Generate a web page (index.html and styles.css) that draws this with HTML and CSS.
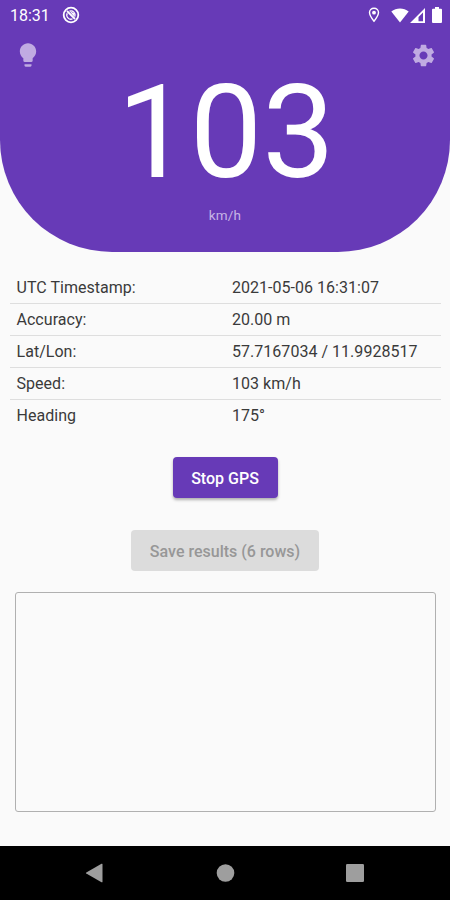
FILE: index.html
```html
<!DOCTYPE html>
<html lang="en">
<head>
    <meta charset="UTF-8">
    <meta name="viewport" content="width=device-width, initial-scale=1.0">
    <title>GPS Speed</title>
    <link rel="stylesheet" href="styles.css">
</head>
<body>
    <header class="speed-panel">
        <div class="status-bar">
            <span class="clock">18:31</span>
            <svg class="status-sync" viewBox="0 0 18 18" width="18" height="18">
                <circle cx="9" cy="9" r="7.3" fill="none" stroke="#fff" stroke-width="1.8"/>
                <path d="M5.200 7.200A4.200 4.200 0 0 0 10.500 12.900M7.500 5.200A4.200 4.200 0 0 1 12.900 10.500" fill="none" stroke="#fff" stroke-width="1.300"/>
                <path d="M5 5L13 13" fill="none" stroke="#fff" stroke-width="1.800"/>
                <path d="M7.500 5L12.500 7.500V11Z" fill="#fff"/>
            </svg>
            <div class="status-icons">
                <svg class="status-location" viewBox="0 0 12 16" width="12" height="16">
                    <path d="M6 1.200C3.400 1.200 1.500 3.100 1.500 5.600C1.500 8.800 6 14.200 6 14.200S10.500 8.800 10.500 5.600C10.500 3.100 8.600 1.200 6 1.200Z" fill="none" stroke="#fff" stroke-width="1.400"/>
                    <circle cx="6" cy="5.700" r="1.900" fill="#fff"/>
                </svg>
                <svg class="status-wifi" viewBox="0 0 18 15" width="18" height="15">
                    <path d="M.3 3.500C5.300-.4 12.700-.4 17.700 3.500L9 14.500Z" fill="#fff"/>
                </svg>
                <svg class="status-signal" viewBox="0 0 15 15" width="15" height="15">
                    <path d="M0 15L15 0V15ZM8.500 13.200H13V4.500L8.500 9Z" fill="#fff" fill-rule="evenodd"/>
                </svg>
                <svg class="status-battery" viewBox="0 0 10 16" width="10" height="16">
                    <path d="M3 0H7V1.700H9Q10 1.700 10 2.700V15Q10 16 9 16H1Q0 16 0 15V2.700Q0 1.700 1 1.700H3Z" fill="#fff"/>
                </svg>
            </div>
        </div>
        <div class="toolbar">
            <svg class="toolbar-icon" viewBox="0 0 24 24" width="28" height="28">
                <path d="M9 21c0 .5.4 1 1 1h4c.6 0 1-.5 1-1v-1H9v1zm3-19C8.100 2 5 5.100 5 9c0 2.400 1.200 4.500 3 5.700V17c0 .5.4 1 1 1h6c.6 0 1-.5 1-1v-2.300c1.800-1.300 3-3.400 3-5.700 0-3.900-3.100-7-7-7z"/>
            </svg>
            <svg class="toolbar-icon" viewBox="0 0 24 24" width="27" height="27">
                <path d="M19.140 12.940c.04-.3.060-.61.060-.94 0-.32-.02-.64-.07-.94l2.030-1.580c.18-.14.230-.41.120-.61l-1.920-3.320c-.12-.22-.37-.29-.59-.22l-2.390.96c-.5-.38-1.030-.7-1.620-.94l-.36-2.540c-.04-.24-.24-.41-.48-.41h-3.840c-.24 0-.43.170-.47.410l-.36 2.540c-.59.240-1.130.57-1.620.94l-2.390-.96c-.22-.08-.47 0-.59.220L2.740 8.870c-.12.210-.08.470.12.610l2.030 1.580c-.05.3-.09.630-.09.940s.02.640.07.940l-2.030 1.580c-.18.140-.23.410-.12.610l1.920 3.320c.12.220.37.290.59.220l2.390-.96c.5.380 1.030.7 1.620.94l.36 2.540c.05.240.24.410.48.410h3.840c.24 0 .44-.17.470-.41l.36-2.540c.59-.24 1.130-.56 1.620-.94l2.390.96c.22.080.47 0 .59-.22l1.920-3.320c.12-.22.070-.47-.12-.61l-2.010-1.580zM12 15.600c-1.980 0-3.600-1.620-3.600-3.600s1.620-3.600 3.600-3.600 3.600 1.620 3.600 3.600-1.620 3.600-3.600 3.600z"/>
            </svg>
        </div>
        <div class="speed-value">103</div>
        <div class="speed-unit">km/h</div>
    </header>

    <main class="content">
        <dl class="readings">
            <div class="reading"><dt>UTC Timestamp:</dt><dd>2021-05-06 16:31:07</dd></div>
            <div class="reading"><dt>Accuracy:</dt><dd>20.00 m</dd></div>
            <div class="reading"><dt>Lat/Lon:</dt><dd>57.7167034 / 11.9928517</dd></div>
            <div class="reading"><dt>Speed:</dt><dd>103 km/h</dd></div>
            <div class="reading"><dt>Heading</dt><dd>175°</dd></div>
        </dl>
        <button class="btn btn-primary">Stop GPS</button>
        <button class="btn btn-save" disabled>Save results (6 rows)</button>
        <div class="log-box"></div>
    </main>

    <nav class="nav-bar">
        <svg viewBox="0 0 20 20" width="20" height="20"><path d="M17.500 1V19Q17.300 19.500 16.500 19.200L1.300 10.600Q.5 10 1.300 9.400L16.500.8Q17.300.5 17.500 1Z"/></svg>
        <svg viewBox="0 0 20 20" width="20" height="20"><circle cx="10.500" cy="10" r="8.800"/></svg>
        <svg viewBox="0 0 20 20" width="20" height="20"><rect x="1" y="1" width="18" height="18" rx="1.300"/></svg>
    </nav>
</body>
</html>
```
FILE: styles.css
```css
*, *::before, *::after {
    box-sizing: border-box;
    margin: 0;
    padding: 0;
}
body {
    font-family: Roboto, sans-serif;
    background-color: #fafafa;
    color: #3a3a3a;
    display: flex;
    flex-direction: column;
    height: 900px;
    overflow: hidden;
}
svg {
    display: block;
    flex: none;
}

/* Purple header */
.speed-panel {
    height: 252px;
    flex: none;
    background-color: #673ab7;
    border-radius: 0 0 112px 112px;
    color: #fff;
}
.status-bar {
    height: 30px;
    display: flex;
    align-items: center;
    padding: 0 8px 0 10px;
}
.clock {
    font-size: 16px;
    width: 52px;
}
.status-icons {
    display: flex;
    align-items: center;
    margin-left: auto;
}
.status-wifi { margin-left: 11px; }
.status-signal { margin-left: 1px; }
.status-battery { margin-left: 7px; }
.toolbar {
    height: 50px;
    display: flex;
    align-items: center;
    justify-content: space-between;
    padding: 0 13px 0 14px;
}
.toolbar-icon {
    fill: #c0abe2;
}
.speed-value {
    margin-top: 3px;
    padding-left: 2px;
    font-size: 129px;
    line-height: 100px;
    text-align: center;
}
.speed-unit {
    margin-top: 24px;
    font-size: 13.5px;
    line-height: 16px;
    letter-spacing: 0.2px;
    text-align: center;
    color: #c8b5e6;
}

.content {
    flex: 1;
    display: flex;
    flex-direction: column;
    align-items: center;
}
.readings {
    width: 431px;
    margin-top: 20px;
    font-size: 16px;
    letter-spacing: 0.03px;
}
.reading {
    display: grid;
    grid-template-columns: 215.5px 1fr;
    height: 32px;
    line-height: 32px;
    padding-left: 7px;
    border-bottom: 1px solid #dedede;
}
.reading:last-child {
    border-bottom: none;
}

.btn {
    height: 41px;
    border: none;
    border-radius: 4px;
    font-family: inherit;
    font-size: 16px;
    font-weight: 500;
}
.btn-primary {
    width: 105px;
    margin-top: 25px;
    padding-top: 2px;
    background-color: #673ab7;
    color: #fff;
    box-shadow: 0 2px 3px rgba(0, 0, 0, 0.3);
}
.btn-save {
    width: 188px;
    margin-top: 32px;
    padding-top: 2px;
    background-color: #dcdcdc;
    color: #979797;
}
.log-box {
    width: 421px;
    height: 220px;
    margin: 21px 0 0 1px;
    border: 1px solid #b0b0b0;
    border-radius: 3px;
}

/* Android navigation */
.nav-bar {
    height: 54px;
    flex: none;
    display: flex;
    justify-content: space-between;
    padding: 17px 85px 0;
    background-color: #000;
}
.nav-bar svg {
    fill: #9e9e9e;
}
```
